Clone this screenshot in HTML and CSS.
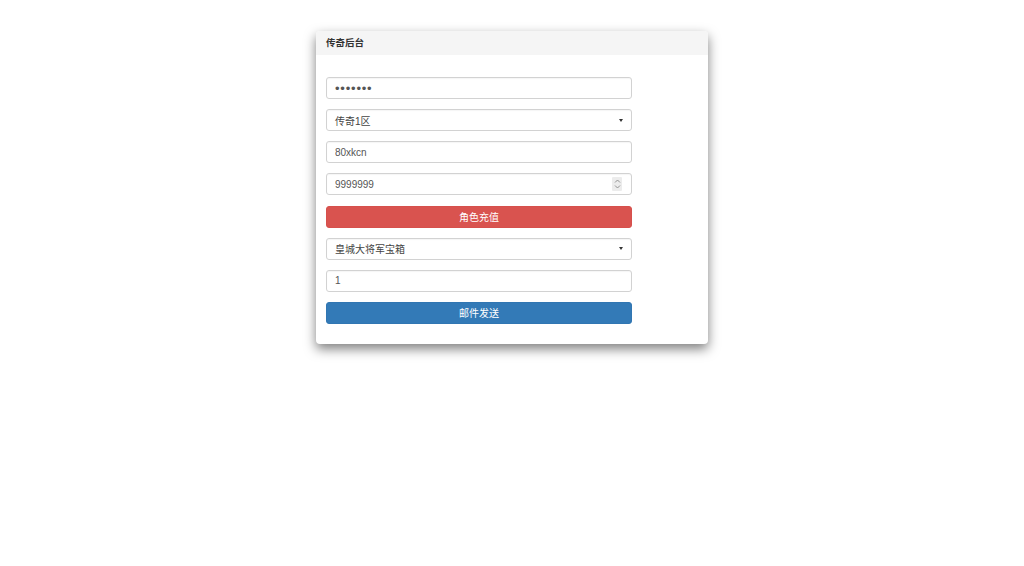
FILE: index.html
```html
<!DOCTYPE html>
<html lang="zh">
<head>
<meta charset="utf-8">
<title>传奇后台</title>
<link rel="stylesheet" href="styles.css">
</head>
<body>
<div class="panel">
  <div class="panel-heading">传奇后台</div>
  <div class="panel-body">
    <div class="field"><input class="ctl pw" type="password" value="1234567"></div>
    <div class="field select"><span class="val">传奇1区</span><span class="caret"></span></div>
    <div class="field"><input class="ctl" type="text" value="80xkcn"></div>
    <div class="field"><input class="ctl" type="text" value="9999999"><span class="spin"><svg width="7" height="10" viewBox="0 0 7 10"><path d="M1 3.5 L3.5 1 L6 3.5 M1 6.5 L3.5 9 L6 6.5" fill="none" stroke="#8a8a8a" stroke-width="0.9"/></svg></span></div>
    <button class="btn btn-danger">角色充值</button>
    <div class="field select"><span class="val">皇城大将军宝箱</span><span class="caret"></span></div>
    <div class="field"><input class="ctl" type="text" value="1"></div>
    <button class="btn btn-primary">邮件发送</button>
  </div>
</div>
</body>
</html>
```
FILE: styles.css
```css
html, body {
  margin: 0;
  padding: 0;
  background: #fff;
}
body {
  font-family: "Liberation Sans", "Noto Sans CJK SC", sans-serif;
  font-size: 10px;
  color: #333;
  padding-top: 31px;
  min-height: 100vh;
  box-sizing: border-box;
}
.panel {
  width: 392px;
  margin: 0 0 0 316px;
  background: #fff;
  border-radius: 4px;
  box-shadow: 0 5px 12px rgba(0,0,0,0.5);
  overflow: hidden;
}
.panel-heading {
  height: 24px;
  line-height: 24px;
  background: #f5f5f5;
  padding: 0 10px;
  font-weight: bold;
  font-size: 9.5px;
  color: #333;
}
.panel-body {
  padding: 22px 10px 20px;
  display: flex;
  flex-direction: column;
  gap: 10.15px;
}
.field {
  width: 306px;
  height: 22px;
  box-sizing: border-box;
  border: 1px solid #d2d2d2;
  border-radius: 3px;
  display: flex;
  align-items: center;
  padding: 0 8px;
  background: #fff;
  box-shadow: inset 0 1px 1px rgba(0,0,0,0.04);
}
.ctl {
  flex: 1;
  border: 0;
  outline: 0;
  padding: 0;
  margin: 0;
  font-family: "Liberation Sans", "Noto Sans CJK SC", sans-serif;
  font-size: 10px;
  color: #555;
  background: transparent;
  min-width: 0;
}
.ctl.pw {
  font-size: 13px;
  letter-spacing: 0.8px;
  color: #555;
}
.select .val {
  flex: 1;
  color: #444;
  font-size: 10px;
}
.caret {
  width: 0;
  height: 0;
  border-left: 2.5px solid transparent;
  border-right: 2.5px solid transparent;
  border-top: 3px solid #333;
  margin-right: 0.5px;
}
.spin {
  width: 10px;
  height: 14px;
  background: #ececec;
  border-radius: 1px;
  display: flex;
  align-items: center;
  justify-content: center;
  margin-right: 1px;
}
.btn {
  width: 306px;
  height: 22px;
  border: 1px solid transparent;
  border-radius: 3px;
  color: #fff;
  font-family: "Liberation Sans", "Noto Sans CJK SC", sans-serif;
  font-size: 10px;
  padding: 0;
  line-height: 21px;
  text-align: center;
}
.btn-danger {
  background: #d9534f;
  border-color: #d6504c;
}
.btn-primary {
  background: #337ab7;
  border-color: #3176b2;
}
```
